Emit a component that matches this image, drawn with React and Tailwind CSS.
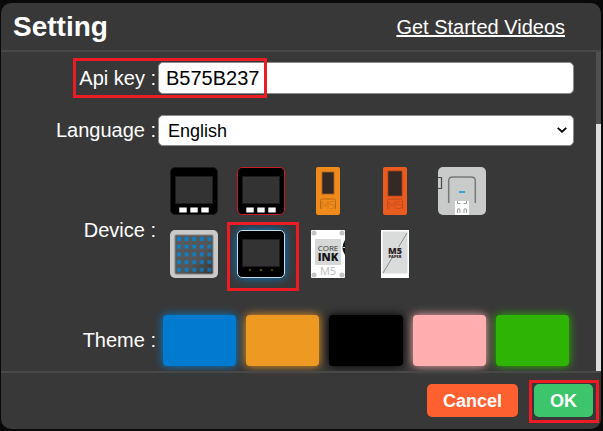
import React, { useState } from "react";

function CoreIcon({ red }) {
  return (
    <svg viewBox="0 0 48 48" className="size-12" aria-hidden="true">
      <rect x="0.5" y="0.5" width="47" height="47" rx="4.5" fill="#000" stroke={red ? "#c81e28" : "#1a1a1a"} />
      <rect x="5.500" y="9.500" width="37" height="27" fill="#333" stroke="#1c1c1c" />
      <rect x="9.300" y="40.500" width="7.400" height="5" fill="#fff" />
      <rect x="20.300" y="40.500" width="7.400" height="5" fill="#fff" />
      <rect x="31.300" y="40.500" width="7.400" height="5" fill="#fff" />
    </svg>
  );
}

function StickIcon({ plus }) {
  return (
    <svg viewBox="0 0 48 48" className="size-12" aria-hidden="true">
      <rect x="12" y="0" width="24" height="48" rx="2" fill={plus ? "#ea5b20" : "#f08a1a"} />
      {plus ? (
        <rect x="17" y="4" width="14" height="25" fill="#352926" stroke="#a63f18" strokeWidth="0.8" />
      ) : (
        <rect x="18" y="5" width="12" height="22" fill="#352926" stroke="#a9641c" strokeWidth="0.8" />
      )}
      <path
        d="M16.500 42V33.500q0-1.500 1.500-1.500h12q1.500 0 1.500 1.500V42"
        fill="none"
        stroke={plus ? "#b8471b" : "#a9641c"}
        strokeWidth="0.8"
      />
      <path
        d="M18 42v-7.500l3 5 3-5V42M30.500 34.500h-4.500v3h3q1.500 0 1.500 2t-1.500 2h-3.500"
        fill="none"
        stroke={plus ? "#cc4e1c" : "#d3791b"}
        strokeWidth="0.9"
      />
    </svg>
  );
}

function AtomIcon() {
  return (
    <svg viewBox="0 0 48 48" className="size-12" aria-hidden="true">
      <rect width="48" height="48" rx="5" fill="#c9cbca" />
      <path d="M0 10.500h3.500v11H0" fill="none" stroke="#4a4a4a" strokeWidth="1.200" />
      <path d="M10.700 36V14q0-4 4-4h18.600q4 0 4 4v22" fill="none" stroke="#777" strokeWidth="1.500" />
      <rect x="21" y="24" width="6" height="2" fill="#36a5d9" />
      <path d="M17 34h14v14H17z" fill="#fff" />
      <path d="M19.500 34v2.500h3M28.500 34v2.500h-3M19.500 46v-4h2.500v4M26 46v-4h2.500v4" fill="none" stroke="#999" />
    </svg>
  );
}

function MatrixIcon() {
  const cells = [0, 1, 2, 3, 4];
  return (
    <svg viewBox="0 0 48 48" className="size-12" aria-hidden="true">
      <defs>
        <linearGradient id="matrix-panel" x1="0" y1="0" x2="1" y2="1">
          <stop offset="0" stopColor="#5c5c5c" />
          <stop offset="0.6" stopColor="#555" />
          <stop offset="1" stopColor="#343434" />
        </linearGradient>
      </defs>
      <rect width="48" height="48" rx="5" fill="#c9c9c9" />
      <rect x="5" y="5" width="38" height="39" rx="1" fill="url(#matrix-panel)" stroke="#858585" />
      {cells.map((r) =>
        cells.map((c) => (
          <rect
            key={r + "-" + c}
            x={7 + c * 7.6}
            y={7 + r * 7.7}
            width="4"
            height="4"
            fill="#0a82cc"
            opacity={1 - (r + c) * 0.04}
          />
        ))
      )}
    </svg>
  );
}

function Core2Icon() {
  return (
    <svg viewBox="0 0 48 48" className="size-12" aria-hidden="true">
      <rect x="0.5" y="0.5" width="47" height="47" rx="4.5" fill="#000" stroke="#c9dce8" />
      <rect x="5.500" y="9.500" width="37" height="27" fill="#333" stroke="#1c1c1c" />
      <circle cx="13" cy="40" r="1.300" fill="#4a3a10" />
      <circle cx="24" cy="40" r="1.300" fill="#5b4914" />
      <circle cx="35" cy="40" r="1.300" fill="#4a3a10" />
    </svg>
  );
}

function InkIcon() {
  return (
    <svg viewBox="0 0 48 48" className="size-12 font-['Open_Sans',sans-serif]" aria-hidden="true">
      <rect x="7" y="0" width="34" height="48" rx="1" fill="#fff" />
      <path d="M41 10q-5 8 0 15z" fill="#111" />
      <path d="M38.800 17.500H41" stroke="#ddd" />
      <g fill="#c4c4c4">
        <circle cx="10" cy="3" r="2.500" />
        <circle cx="38" cy="3" r="2.500" />
        <circle cx="10" cy="45" r="2.500" />
        <circle cx="38" cy="45" r="2.500" />
      </g>
      <rect x="11" y="9" width="26" height="26" rx="1" fill="#d6d8d8" />
      <text textAnchor="middle">
        <tspan x="24" y="20.500" fontSize="8" fontWeight="500" fill="#333">CORE</tspan>
        <tspan x="24" y="31" fontSize="11" fontWeight="800" fill="#161616">INK</tspan>
        <tspan x="24" y="45" fontSize="11" fill="#bbb">M5</tspan>
      </text>
    </svg>
  );
}

function PaperIcon() {
  return (
    <svg viewBox="0 0 48 48" className="size-12 font-['Open_Sans',sans-serif]" aria-hidden="true">
      <rect x="10" y="0" width="28" height="48" fill="#fff" />
      <rect x="11.500" y="1.500" width="25" height="42" fill="#dadcdc" />
      <path d="M12 43L36 3" stroke="#777" strokeWidth="0.8" />
      <rect x="17" y="17" width="14" height="11" fill="#dadcdc" />
      <text textAnchor="middle" fontWeight="800" fill="#2a2024">
        <tspan x="24" y="24" fontSize="9">M5</tspan>
        <tspan x="24" y="28" fontSize="4">PAPER</tspan>
      </text>
    </svg>
  );
}

const devices = [
  { name: "Core", icon: <CoreIcon /> },
  { name: "Fire", icon: <CoreIcon red /> },
  { name: "StickC", icon: <StickIcon /> },
  { name: "StickC Plus", icon: <StickIcon plus /> },
  { name: "Atom Lite", icon: <AtomIcon /> },
  { name: "Atom Matrix", icon: <MatrixIcon /> },
  { name: "Core2", icon: <Core2Icon />, marked: true },
  { name: "CoreInk", icon: <InkIcon /> },
  { name: "Paper", icon: <PaperIcon /> },
];

const themes = [
  { name: "Blue", style: "bg-[#007bd0] shadow-[0_0_10px_#007bd0]" },
  { name: "Orange", style: "bg-[#ee9a22] shadow-[0_0_10px_#ee9a22]" },
  { name: "Black", style: "bg-black shadow-[0_0_10px_#000]" },
  { name: "Pink", style: "bg-[#ffafaf] shadow-[0_0_10px_#ffafaf]" },
  { name: "Green", style: "bg-[#2eb404] shadow-[0_0_10px_#2eb404]" },
];

const labelStyle = "w-[155px] shrink-0 pb-px text-right text-xl leading-6";
const markStyle = "pointer-events-none absolute border-3 border-[#ed1c24]";

export default function App() {
  const [apiKey, setApiKey] = useState("B575B237");
  const [device, setDevice] = useState("Core2");

  return (
    <div className="flex min-h-screen flex-col bg-[#090909] pt-[3px] pr-[2px] pb-[2px] pl-px font-['Liberation_Sans',Arial,sans-serif] text-white">
      <main className="flex flex-1 flex-col rounded-[10px] bg-[#383838]">
        <header className="flex h-[49px] items-center justify-between border-b-2 border-[#484848] pr-9 pl-3">
          <h1 className="text-[28px] leading-8 font-bold">Setting</h1>
          <a href="#videos" className="text-xl leading-6 underline">Get Started Videos</a>
        </header>

        <div className="flex flex-1">
          <form className="flex min-w-0 flex-1 flex-col gap-[21px] pt-[10px] pr-[22px] pb-[5px]">
            <div className="relative flex items-center gap-[2px]">
              <label htmlFor="api-key" className={labelStyle}>Api key :</label>
              <input
                id="api-key"
                value={apiKey}
                onChange={(e) => setApiKey(e.target.value)}
                className="h-8 min-w-0 flex-1 rounded-[5px] border border-[#8c8c8c] bg-white px-[7px] text-xl leading-6 text-black outline-none"
              />
              <span className={markStyle + " -top-1 left-[72px] h-10 w-[194px]"} />
            </div>

            <div className="flex items-center gap-[2px]">
              <label htmlFor="language" className={labelStyle}>Language :</label>
              <div className="relative flex min-w-0 flex-1">
                <select
                  id="language"
                  defaultValue="English"
                  className="h-[31px] w-full appearance-none rounded-[5px] border border-[#8c8c8c] bg-white px-[9px] text-lg leading-6 text-black outline-none"
                >
                  <option>English</option>
                </select>
                <svg viewBox="0 0 10 6" className="pointer-events-none absolute top-3 right-[7px] h-[6px] w-[10px]" aria-hidden="true">
                  <path d="M0.700 0.800L5 4.700L9.300 0.800" fill="none" stroke="#000" strokeWidth="1.800" />
                </svg>
              </div>
            </div>

            <div className="flex items-center gap-[2px]">
              <span id="device-label" className={labelStyle}>Device :</span>
              <div role="group" aria-labelledby="device-label" className="grid grid-cols-[repeat(5,48px)] gap-x-[19px] gap-y-[15px] pb-4 pl-3">
                {devices.map((d) => (
                  <button
                    key={d.name}
                    type="button"
                    aria-label={d.name}
                    aria-pressed={device === d.name}
                    onClick={() => setDevice(d.name)}
                    className={"relative size-12 rounded-md " + (device === d.name ? "shadow-[0_0_10px_#007bd0]" : "")}
                  >
                    {d.icon}
                    {d.marked && <span className={markStyle + " -top-2 -left-[10px] h-[69px] w-[72px]"} />}
                  </button>
                ))}
              </div>
            </div>

            <div className="flex items-center gap-[2px]">
              <span id="theme-label" className={labelStyle}>Theme :</span>
              <div role="group" aria-labelledby="theme-label" className="flex min-w-0 flex-1 gap-[10px] px-[5px]">
                {themes.map((t) => (
                  <button key={t.name} type="button" aria-label={t.name} className={"h-[51px] flex-1 rounded-[4px] " + t.style} />
                ))}
              </div>
            </div>
          </form>
          <div className="flex w-[5px] flex-col bg-[#4f4f4f] pt-[72px]">
            <div className="flex-1 bg-[#dedede]" />
          </div>
        </div>

        <footer className="flex items-start justify-end gap-4 border-t-2 border-[#484848] pt-[11px] pr-2 pb-3">
          <button type="button" className="h-[33px] rounded-[5px] bg-[#ff6030] px-4 text-lg leading-6 font-bold">Cancel</button>
          <div className="relative">
            <button type="button" className="h-[33px] rounded-[5px] bg-[#3cc56a] px-4 text-lg leading-6 font-bold">OK</button>
            <span className={markStyle + " -top-1 -left-[5px] h-[43px] w-[70px]"} />
          </div>
        </footer>
      </main>
    </div>
  );
}
